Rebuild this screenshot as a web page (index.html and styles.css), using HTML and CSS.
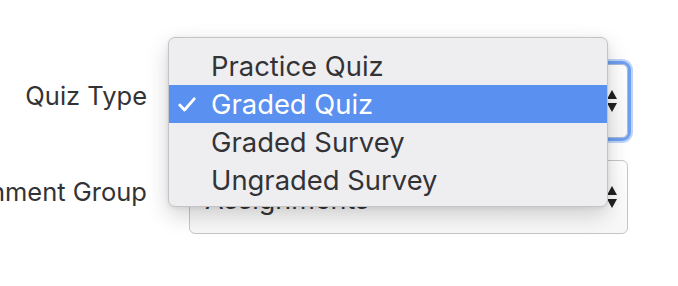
FILE: index.html
```html
<!DOCTYPE html>
<html>
<head>
<meta charset="utf-8">
<link rel="stylesheet" href="styles.css">
</head>
<body>
<form class="form">
  <div class="row">
    <label class="label">Quiz Type</label>
    <div class="select focused">
      <span class="value">Graded Quiz</span>
      <span class="arrows"><span class="up"></span><span class="down"></span></span>
    </div>
  </div>
  <div class="row">
    <label class="label">Assignment Group</label>
    <div class="select">
      <span class="value">Assignments</span>
      <span class="arrows"><span class="up"></span><span class="down"></span></span>
    </div>
  </div>
  <ul class="menu">
    <li class="item">Practice Quiz</li>
    <li class="item selected"><svg class="check" viewBox="0 0 18 15" width="18" height="15"><polyline points="1.8,8 6.5,13 16.2,1.8" fill="none" stroke="#fff" stroke-width="2.8" stroke-linecap="round" stroke-linejoin="round"/></svg>Graded Quiz</li>
    <li class="item">Graded Survey</li>
    <li class="item">Ungraded Survey</li>
  </ul>
</form>
</body>
</html>
```

FILE: styles.css
```css
html, body {
  margin: 0;
  padding: 0;
  background: #ffffff;
  overflow: hidden;
}
body {
  width: 678px;
  height: 286px;
  font-family: Inter, "Liberation Sans", sans-serif;
  color: #333336;
}
.form {
  position: relative;
  display: flex;
  flex-direction: column;
  gap: 22px;
  padding-top: 64px;
}
.row {
  display: grid;
  grid-template-columns: 147px 439px;
  column-gap: 42px;
  align-items: center;
}
.label {
  justify-self: end;
  white-space: nowrap;
  font-size: 25.5px;
  padding-bottom: 11px;
  color: #333336;
}
.select {
  position: relative;
  box-sizing: border-box;
  height: 74px;
  border: 1px solid #c6c6c8;
  border-radius: 6px;
  background: linear-gradient(#ffffff, #f7f7f7);
  display: flex;
  align-items: center;
  padding-left: 15px;
  padding-top: 4px;
  font-size: 27px;
}
.select.focused {
  border-color: #a9b9d6;
  box-shadow: 0 0 0 3px #6e9ff0, 0 0 0 5px rgba(110, 159, 240, 0.45);
}
.arrows {
  position: absolute;
  right: 10px;
  top: 50%;
  transform: translateY(-50%);
  display: flex;
  flex-direction: column;
  gap: 4px;
}
.up, .down {
  width: 0;
  height: 0;
  border-left: 5px solid transparent;
  border-right: 5px solid transparent;
}
.up { border-bottom: 9px solid #222224; }
.down { border-top: 9px solid #222224; }
.menu {
  position: absolute;
  left: 168px;
  top: 37px;
  width: 440px;
  box-sizing: border-box;
  margin: 0;
  padding: 9px 0 7px;
  list-style: none;
  background: #eeeef1;
  border: 1px solid #c4c4c6;
  border-radius: 7px;
  box-shadow: 0 8px 22px rgba(0, 0, 0, 0.18), 0 1px 4px rgba(0, 0, 0, 0.08);
}
.item {
  position: relative;
  height: 38px;
  line-height: 38px;
  padding-left: 42px;
  font-size: 27.4px;
  color: #333336;
  white-space: nowrap;
}
.item.selected {
  background: #5a90ef;
  color: #ffffff;
}
.check {
  position: absolute;
  left: 9px;
  top: 12px;
}
```
